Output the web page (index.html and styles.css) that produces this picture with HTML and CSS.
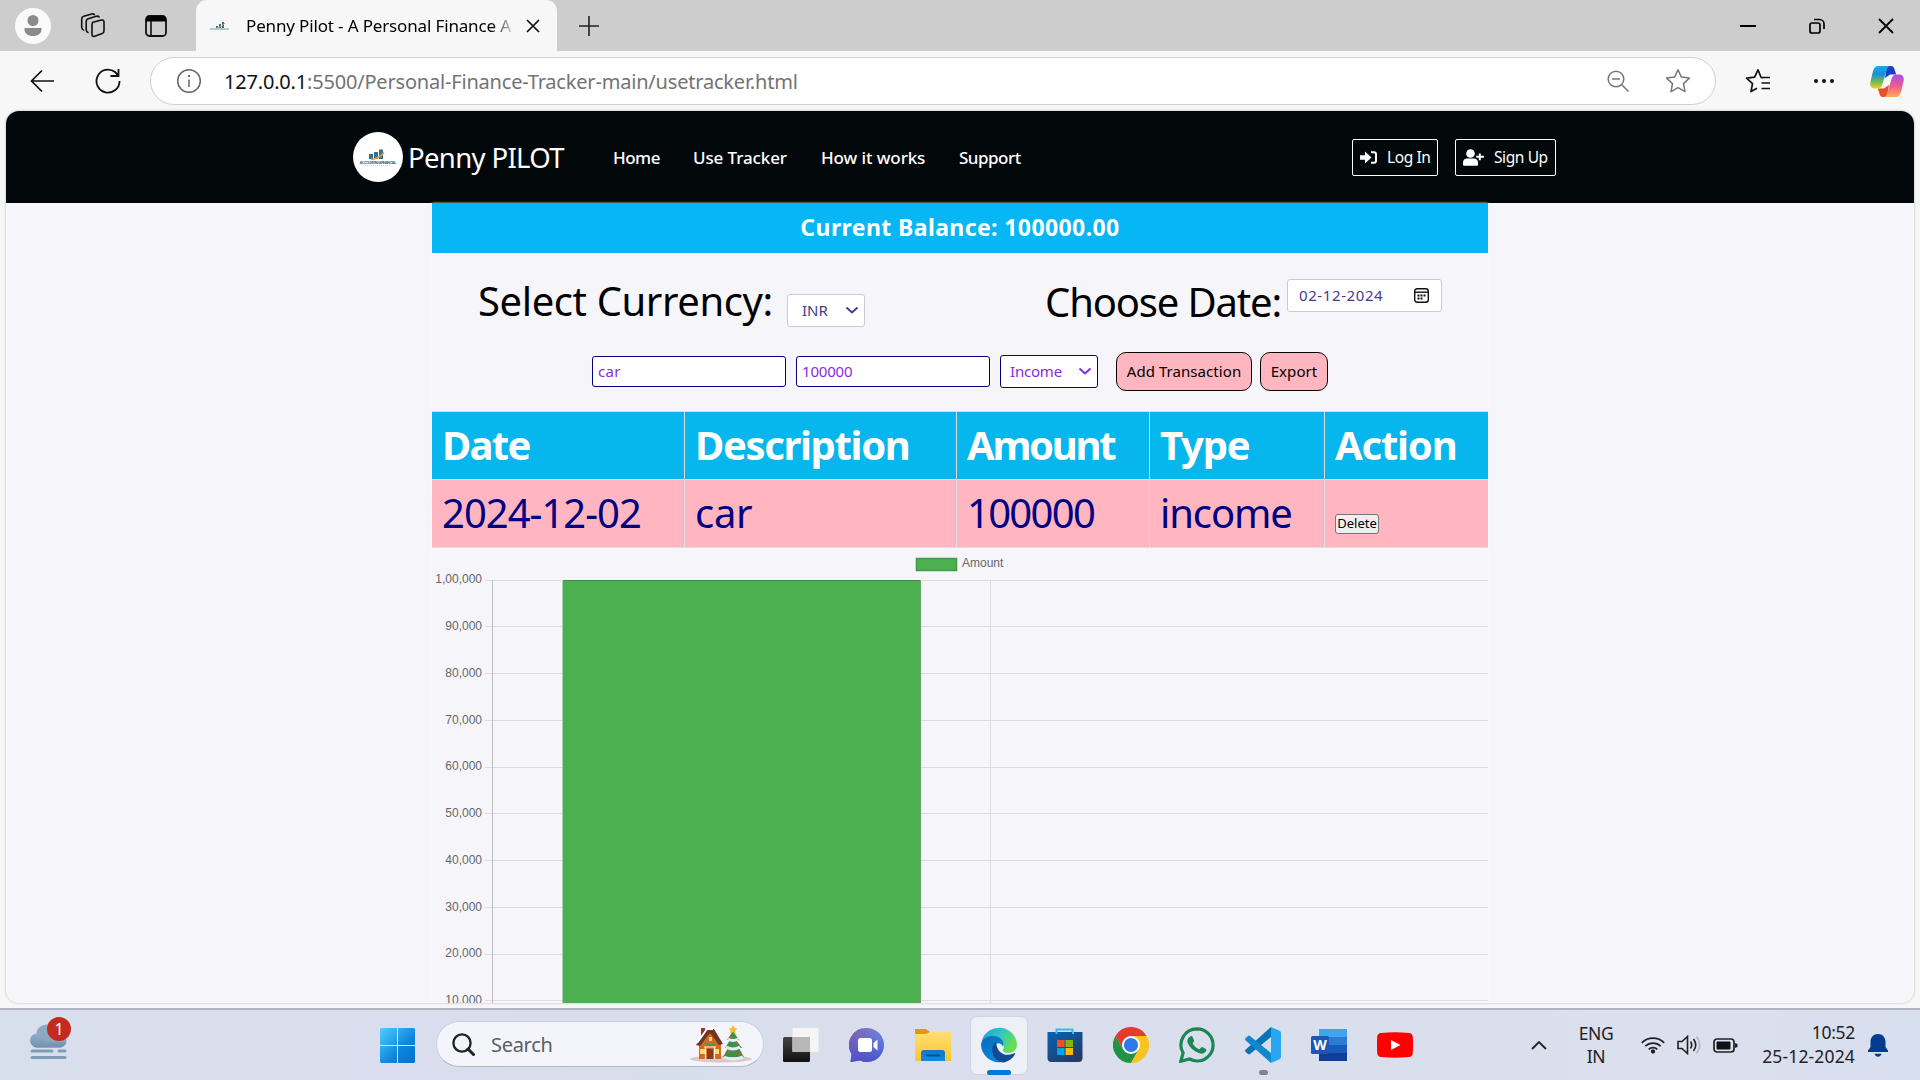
FILE: index.html
```html
<!DOCTYPE html>
<html lang="en">
<head>
<meta charset="utf-8">
<title>Penny Pilot - A Personal Finance App</title>
<link rel="stylesheet" href="styles.css">
</head>
<body>
<div class="tabbar">
  <svg class="profile" width="36" height="36" viewBox="0 0 36 36"><circle cx="18" cy="18" r="18" fill="#fafafa"/><circle cx="18" cy="12.500" r="5.500" fill="#8a8a8a"/><path d="M9.500 20h17v1.500c0 4-3.500 6.500-8.500 6.500s-8.500-2.500-8.500-6.500z" fill="#8a8a8a"/></svg>
  <svg class="workspaces" width="27" height="25" viewBox="0 0 27 25" fill="none" stroke="#111" stroke-width="1.600" stroke-linejoin="round" stroke-linecap="round"><path d="M13 9.300l8.500-2.200q2.500-.6 2.500 2v9q0 2-1.800 2.500l-7.500 2.600q-2.700.8-2.700-1.700V11.500q0-1.700 1-2.200z"/><path d="M8 19.500q-1.800-.5-1.800-3V8.500q0-2 2-2.700l8-2.500q2-.5 2.800.7M3.500 17q-1.800-.6-1.800-3V6q0-2 2-2.700l8-2.300q2-.5 2.600.6"/></svg>
  <svg class="tabs-icon" width="22" height="22" viewBox="0 0 22 22"><rect x="1" y="1" width="20" height="20" rx="3.500" fill="none" stroke="#111" stroke-width="1.800"/><path d="M1 6.500V4a3 3 0 0 1 3-3h14a3 3 0 0 1 3 3v2.500z" fill="#000"/><path d="M6 6v15" stroke="#111" stroke-width="1.600"/></svg>
  <div class="tab">
    <svg width="19" height="10" viewBox="0 0 19 10"><path d="M6 7V5h2v2zM9 7V3h2v4zM12 7V1h2v6z" fill="#37718e"/><path d="M7 7q5-1 8-5" stroke="#f29a38" fill="none"/><path d="M0 8h19" stroke="#8fb0c0" stroke-width="1.300"/></svg>
    <span class="tab-title">Penny Pilot - A Personal Finance A</span>
    <svg width="14" height="14" viewBox="0 0 14 14" stroke="#111" stroke-width="1.700"><path d="M1 1l12 12M13 1L1 13"/></svg>
  </div>
  <svg class="plus" width="22" height="22" viewBox="0 0 22 22" stroke="#222" stroke-width="1.600"><path d="M11 1v20M1 11h20"/></svg>
  <div class="window-controls">
    <svg width="16" height="16" viewBox="0 0 16 16"><path d="M0 8h16" stroke="#000" stroke-width="2"/></svg>
    <svg width="16" height="16" viewBox="0 0 16 16" fill="none" stroke="#000" stroke-width="1.700"><rect x="1" y="5" width="10" height="10" rx="2"/><path d="M5 1.500h5.500a4.500 4.500 0 0 1 4.500 4.500V11"/></svg>
    <svg width="16" height="16" viewBox="0 0 16 16" stroke="#000" stroke-width="1.800"><path d="M1 1l14 14M15 1L1 15"/></svg>
  </div>
</div>
<div class="toolbar">
  <svg class="back" width="25" height="24" viewBox="0 0 25 24" fill="none" stroke="#111" stroke-width="1.700"><path d="M12 1.500L1.500 12 12 22.500M1.500 12H24"/></svg>
  <svg class="reload" width="26" height="26" viewBox="0 0 26 26" fill="none" stroke="#111" stroke-width="1.800"><path d="M24.500 13A11.500 11.500 0 1 1 20 4l3 3M23.500 1v7h-8"/></svg>
  <div class="address">
    <svg class="info" width="26" height="26" viewBox="0 0 26 26" fill="none" stroke="#666" stroke-width="1.500"><circle cx="13" cy="13" r="11.300"/><path d="M13 11.500v7.500"/><path d="M13 7v2" stroke-width="2"/></svg>
    <span class="url"><b>127.0.0.1</b>:5500/Personal-Finance-Tracker-main/usetracker.html</span>
    <svg class="zoomout" width="22" height="22" viewBox="0 0 22 22" fill="none" stroke="#777" stroke-width="1.500"><circle cx="9" cy="9" r="7.800"/><path d="M5 9h8M14.500 14.500l7 7"/></svg>
    <svg class="star" width="26" height="26" viewBox="0 0 26 26" fill="none" stroke="#777" stroke-width="1.500" stroke-linejoin="round"><path d="M13 1.800l3.400 7.300 8 1-5.900 5.500 1.500 8L13 19.700 6 23.600l1.500-8L1.600 10.100l8-1z"/></svg>
  </div>
  <svg class="favs" width="26" height="26" viewBox="0 0 26 26" fill="none" stroke="#111" stroke-width="1.700" stroke-linejoin="round"><path d="M18 10l-2-.8L13 1.800l-3.400 7.300-8 1 5.900 5.500-1.500 8 6-3.300M15.500 9.500H25M16.500 15H25M16.500 20.500H25"/></svg>
  <svg class="dots" width="22" height="6" viewBox="0 0 22 6" fill="#111"><circle cx="3" cy="3" r="2"/><circle cx="11" cy="3" r="2"/><circle cx="19" cy="3" r="2"/></svg>
  <svg class="copilot" width="34" height="31" viewBox="0 0 34 31">
    <defs><linearGradient id="cpa" x2="0" y2="1"><stop stop-color="#1ba8f2"/><stop offset=".35" stop-color="#1c8edb"/><stop offset=".7" stop-color="#6dbb4f"/><stop offset="1" stop-color="#f7cf1b"/></linearGradient><linearGradient id="cpb" x2="0" y2="1"><stop stop-color="#a64ef0"/><stop offset=".5" stop-color="#f0588f"/><stop offset="1" stop-color="#ffad52"/></linearGradient></defs>
    <path d="M17 0h3.500c3 0 3.800 2 4.500 5l1.200 3.500H20L15 12z" fill="#1a3fc4"/><path d="M17 31h-3.500c-3 0-3.800-2-4.500-5l-1.200-3.500H14l5-3.500z" fill="#e8502c"/>
    <path d="M8 0h12c-3 1-3.500 4-4.500 8l-3 10c-1 3-2 4.500-5 4.500H5c-4 0-5.500-3-4.500-7L3 5C4 2 5.500 0 8 0z" fill="url(#cpa)"/>
    <path d="M26 31H14c3-1 3.500-4 4.500-8l3-10c1-3 2-4.500 5-4.500H29c4 0 5.500 3 4.500 7L31 26c-1 3-2.500 5-5 5z" fill="url(#cpb)"/>
  </svg>
</div>
<main class="page">
  <header class="site-header">
    <svg class="logo" width="50" height="50" viewBox="0 0 50 50"><circle cx="25" cy="25" r="25" fill="#fff"/><path d="M16 27v-5h4v5zM21 27v-7h4v7zM26 27v-9.500h4V27z" fill="#37718e"/><path d="M18 27.500q8-1 13-7" stroke="#f29a38" stroke-width="1.500" fill="none"/><text class="logo-name" x="25" y="31.500" textLength="37">ACCOUNTING&amp;FINANCIAL</text><path d="M12 33.500h25" stroke="#c9d7de" stroke-width="1" stroke-dasharray="1 1"/></svg>
    <span class="brand">Penny PILOT</span>
    <nav class="nav"><a class="tight">Home</a><a>Use Tracker</a><a>How it works</a><a class="tight">Support</a></nav>
    <div class="auth">
      <a class="auth-btn login"><svg width="17" height="13" viewBox="0 0 17 13"><path d="M0 4.200h5V.5l6.500 6L5 12.500V8.800H0z" fill="#fff"/><path d="M11 1.200h3a2 2 0 0 1 2 2v6.600a2 2 0 0 1-2 2h-3" fill="none" stroke="#fff" stroke-width="2"/></svg><span>Log In</span></a>
      <a class="auth-btn signup"><svg width="21" height="17" viewBox="0 0 21 17" fill="#fff"><circle cx="7.500" cy="4.500" r="4.300"/><path d="M0 16v-2.500C0 11 2 9.500 4 9.500h7c2 0 4 1.500 4 4V16q0 .8-1 .8H1Q0 16.800 0 16z"/><path d="M15.800 4.500h2v2.300H21v2h-3.200v2.500h-2V8.800h-2.600v-2h2.600z"/></svg><span>Sign Up</span></a>
    </div>
  </header>
  <section class="tracker">
    <div class="balance"><span>Current Balance: 100000.00</span></div>
    <div class="pickers">
      <span class="big cur-label">Select Currency:</span>
      <div class="field cur"><span>INR</span><svg width="14" height="9" viewBox="0 0 14 9" fill="none" stroke="#483d8b" stroke-width="2"><path d="M1.500 1.500L7 6.500l5.500-5"/></svg></div>
      <span class="big date-label">Choose Date:</span>
      <div class="field date"><span>02-12-2024</span><svg width="15" height="15" viewBox="0 0 15 15" fill="none" stroke="#111" stroke-width="1.400"><rect x=".7" y=".7" width="13.600" height="13.600" rx="2.500"/><path d="M1 4.200h13"/><path d="M3.500 7.500h8M3.500 10.500h5" stroke-width="1.800" stroke-dasharray="2 1"/></svg></div>
    </div>
    <div class="entry">
      <div class="input"><span class="car">car</span></div>
      <div class="input"><span>100000</span></div>
      <div class="type-select"><span>Income</span><svg width="14" height="9" viewBox="0 0 14 9" fill="none" stroke="#8a2be2" stroke-width="2"><path d="M1.500 1.500L7 6.500l5.500-5"/></svg></div>
      <div class="btn add"><span>Add Transaction</span></div>
      <div class="btn export"><span>Export</span></div>
    </div>
    <div class="table">
      <div class="row head"><div class="h-date">Date</div><div class="h-desc">Description</div><div class="h-amount">Amount</div><div class="h-type">Type</div><div class="h-action">Action</div></div>
      <div class="row data"><div class="d-date">2024-12-02</div><div class="d-desc">car</div><div class="d-amount">100000</div><div class="d-type">income</div><div class="action"><span class="delete">Delete</span></div></div>
    </div>
    <svg class="chart" width="1056" height="456" viewBox="0 0 1056 456">
      <rect x="484.500" y="10.500" width="40" height="12" fill="#4caf50" stroke="#43994a" stroke-width="1.500"/>
      <text x="530" y="19">Amount</text>
      <g class="labels"><text x="50" y="34.500">1,00,000</text><text x="50" y="82">90,000</text><text x="50" y="129">80,000</text><text x="50" y="176">70,000</text><text x="50" y="222">60,000</text><text x="50" y="269">50,000</text><text x="50" y="316">40,000</text><text x="50" y="363">30,000</text><text x="50" y="409">20,000</text><text x="50" y="456">10,000</text></g>
      <path d="M53 32.500h1003M53 78.500h1003M53 125.500h1003M53 172.500h1003M53 219.500h1003M53 265.500h1003M53 312.500h1003M53 359.500h1003M53 406.500h1003M53 452.500h1003M558.500 32v424" stroke="#dcdbe2"/>
      <path d="M60.500 32v424" stroke="#bdbcc4"/>
      <path d="M131 456V33h357.500v423" fill="#4caf50" stroke="#5fa765"/>
      <path d="M131 32.500h357.500" stroke="#3b8b41"/>
    </svg>
  </section>
</main>
<footer class="taskbar">
  <div class="weather">
    <svg width="37" height="30" viewBox="0 0 37 30"><defs><linearGradient id="cl" x2="0" y2="1"><stop stop-color="#8fb0d0"/><stop offset="1" stop-color="#7590ac"/></linearGradient></defs><path d="M7 29.500a7 7 0 0 1-.5-13.800C7 10 11 6.500 17 6.500c6 0 10 4 11 8.500 5 0 8.500 3 8.500 7.500s-3.500 7-7.500 7z" fill="#8da9c2"/><path d="M7 29.500a7 7 0 1 1 5-12c3 2.500 3 6 8 6h16.300c-.5 4-3.800 6-7.300 6z" fill="url(#cl)"/></svg>
    <svg width="37" height="12" viewBox="0 0 37 12" stroke="#7f9bb5" stroke-width="3" stroke-linecap="round"><path d="M2 3h20M29 3h6M2 9.500h33"/></svg>
    <span class="badge">1</span>
  </div>
  <svg class="start" width="35" height="35" viewBox="0 0 35 35"><defs><linearGradient id="wn" x2="1" y2="1"><stop stop-color="#4fd0ff"/><stop offset=".6" stop-color="#0f85dc"/><stop offset="1" stop-color="#0070d0"/></linearGradient></defs><path d="M1 0h16v17H0V1zM18 0h16l1 1v16H18zM0 18h17v17H1l-1-1zM18 18h17v16l-1 1H18z" fill="url(#wn)"/></svg>
  <div class="search">
    <svg class="glass" width="23" height="23" viewBox="0 0 23 23" fill="none" stroke="#222" stroke-width="2.300" stroke-linecap="round"><circle cx="10" cy="10" r="8.600"/><path d="M16 16l5.500 5.500" stroke-width="3"/></svg>
    <span>Search</span>
    <svg class="xmas" width="64" height="38" viewBox="0 0 64 38">
      <ellipse cx="32" cy="34" rx="31" ry="3.500" fill="#dcc8ca"/>
      <path d="M10 17L20 5l12 12v17H10z" fill="#d46a1f"/><path d="M12 3h4v8h-4z" fill="#9b3328"/><path d="M7 20L17 4h8l9 15-4 1-9-12-10 13z" fill="#713528"/><path d="M8 18l10-14h6" stroke="#fff" stroke-width="1.800" fill="none"/><path d="M16 18q5 4 10 0" stroke="#3a9b5a" stroke-width="2" fill="none"/><path d="M18 24h6v10h-6z" fill="#8d3a19"/><path d="M11 24h5v5h-5zM26 24h4v5h-4zM20 12h3v4h-3z" fill="#ffd873"/><path d="M15 22h12M16.500 22v12M25.500 22v12" stroke="#fff0e6" stroke-width="1.200"/>
      <path d="M44 6l6 9h-3l6 8h-3l5 9H34l5-9h-3l5-8h-3z" fill="#3b9245"/><path d="M39 14q5 3 10 0M37 22q7 4 14 0M35 32q9 4 19 0" stroke="#e2ecfa" stroke-width="3" fill="none"/><path d="M44 0l1.500 3 3 .4-2.200 2 .6 3L44 7l-3 1.400.6-3-2.200-2 3-.4z" fill="#fbbf2d"/><g fill="#e04b3c"><circle cx="42" cy="12" r="1.200"/><circle cx="47" cy="19" r="1.300"/><circle cx="40" cy="27" r="1.400"/><circle cx="50" cy="29" r="1.400"/></g>
    </svg>
  </div>
  <div class="apps">
    <div class="app"><svg width="36" height="36" viewBox="0 0 36 36"><defs><linearGradient id="tv" x2="0" y2="1"><stop stop-color="#444"/><stop offset="1" stop-color="#111"/></linearGradient></defs><rect x="0" y="10" width="27" height="25" rx="1.500" fill="url(#tv)"/><rect x="9.500" y="1" width="26" height="24" rx="1" fill="#f5f5f5"/><path d="M9.500 10H27v15H9.500z" fill="#b7b7b7"/></svg></div>
    <div class="app"><svg width="36" height="36" viewBox="0 0 36 36"><defs><linearGradient id="ch" x1="0" x2="1" y2=".3"><stop stop-color="#8a5ba8"/><stop offset="1" stop-color="#6a8eea"/></linearGradient><linearGradient id="ch2" x2="0" y2="1"><stop stop-color="#5058cc" stop-opacity="0"/><stop offset="1" stop-color="#4e50c8"/></linearGradient></defs><path d="M18 1a17 17 0 1 1-7 32.500L1.500 35l1-8A17 17 0 0 1 18 1z" fill="url(#ch)"/><path d="M18 1a17 17 0 1 1-7 32.500L1.500 35l1-8A17 17 0 0 1 18 1z" fill="url(#ch2)"/><rect x="9" y="11" width="14" height="14" rx="2.500" fill="#fff"/><path d="M24.500 16l4-3.500v11l-4-3.500z" fill="#fff"/></svg></div>
    <div class="app"><svg width="36" height="36" viewBox="0 0 36 36"><defs><linearGradient id="fd" x2="0" y2="1"><stop stop-color="#ffde74"/><stop offset="1" stop-color="#fbc530"/></linearGradient><linearGradient id="fb" x2="0" y2="1"><stop stop-color="#0f76cd"/><stop offset="1" stop-color="#0b8de0"/></linearGradient></defs><path d="M0 2h11l4 3v10H0z" fill="#dc9c08"/><path d="M0 7h11l4-2h21v29H0z" fill="url(#fd)"/><path d="M6 34v-8a3 3 0 0 1 3-3h18a3 3 0 0 1 3 3v8z" fill="url(#fb)"/><path d="M11 28.500h14" stroke="#05498c" stroke-width="1.800"/></svg></div>
    <div class="app active"><svg width="36" height="36" viewBox="0 0 36 36"><defs><linearGradient id="eg" x2="1" y2=".4"><stop stop-color="#1c9dd8"/><stop offset=".55" stop-color="#2fc7c5"/><stop offset="1" stop-color="#66df4f"/></linearGradient><linearGradient id="eb" x2=".6" y2="1"><stop stop-color="#0c68b8"/><stop offset="1" stop-color="#0989dd"/></linearGradient></defs><path d="M1 13A18 18 0 0 1 36 17c0 6-4 9-9 9-4 0-6-2-5-3.500 2-3 1-10-9-10Q5 12 0 19z" fill="url(#eg)"/><path d="M0 18C1 11 7 9 12 9c8 0 12 6 10 11-1-4-7-6-9 0-1 6 2 11 8 15A18 18 0 0 1 0 18z" fill="url(#eb)"/><path d="M15 15c-7 5-4 19 7 20.500 5-.5 10-4 12-8.500.5-1-.5-1-1.500-.6C25 30 16 27 15 15z" fill="#104c96"/></svg></div>
    <div class="app"><svg width="36" height="36" viewBox="0 0 36 36"><defs><linearGradient id="st" x2=".7" y2="1"><stop stop-color="#0764b6"/><stop offset="1" stop-color="#243a66"/></linearGradient></defs><path d="M9.500 8V2.500h16V8" fill="none" stroke="#33bdf2" stroke-width="2"/><path d="M.5 5h35v26a4 4 0 0 1-4 4h-27a4 4 0 0 1-4-4z" fill="url(#st)"/><path d="M9.500 5v2M26 5v2" stroke="#33bdf2" stroke-width="2"/><path d="M10 13h7.500v7H10z" fill="#f25022"/><path d="M18.500 13H26v7h-7.500z" fill="#7fba00"/><path d="M10 21h7.500v7H10z" fill="#00a4ef"/><path d="M18.500 21H26v7h-7.500z" fill="#ffb900"/></svg></div>
    <div class="app"><svg width="36" height="36" viewBox="0 0 36 36"><path d="M2.400 9A18 18 0 0 1 33.600 9L18 9 10.200 22.500z" fill="#e33b2e"/><path d="M2.400 9A18 18 0 0 0 18 36l7.800-13.500H10.200z" fill="#229342"/><path d="M33.600 9A18 18 0 0 1 18 36l7.800-13.500L18 9z" fill="#fcc31e"/><circle cx="18" cy="18" r="9" fill="#fff"/><circle cx="18" cy="18" r="7.100" fill="#2f78e8"/></svg></div>
    <div class="app"><svg width="36" height="36" viewBox="0 0 36 36"><path d="M18 1.800A16 16 0 0 1 18 34a16 16 0 0 1-7.500-2L1.800 34.200l2.300-8.300A16.100 16.100 0 0 1 18 1.800z" fill="none" stroke="#1b8755" stroke-width="3.200"/><path d="M11 9.500c1-.8 2-.7 2.500.3l1.600 3.600c.3 1-1.800 2.300-1.400 3.100 1.500 2.700 3.600 4.600 6.500 5.700 1 .3 2-2.500 3-2.100l3.700 1.800c.8.500.2 2.500-.7 3.400-1.700 1.500-4 1.700-6.500.8-5.200-1.700-9-5.400-11-10-.9-2.600 0-5 2.300-6.600z" fill="#1b8755"/></svg></div>
    <div class="app running"><svg width="36" height="36" viewBox="0 0 36 36"><path d="M26 0v10L5 27q-1 .8-2 0l-2.500-2.200q-1-1 0-2z" fill="#0873b8"/><path d="M26 36V26L5 9q-1-.8-2 0L.5 11.200q-1 1 0 2z" fill="#1088cf"/><path d="M26 0l8.500 3.800q1.500.7 1.500 2.200v24q0 1.500-1.500 2.200L26 36z" fill="#27a7f2"/></svg></div>
    <div class="app"><svg width="36" height="36" viewBox="0 0 36 36"><rect x="8" y="2" width="28" height="8.500" fill="#41a5ee"/><rect x="8" y="10" width="28" height="8.500" fill="#2b7cd3"/><rect x="8" y="18" width="28" height="8" fill="#185abd"/><rect x="8" y="26" width="28" height="8" fill="#103f91"/><rect y="9" width="18" height="18" rx="1.500" fill="#1d56b4"/><text class="word" x="9" y="23">W</text></svg></div>
    <div class="app"><svg width="36" height="36" viewBox="0 0 36 36"><path d="M4 6q14-1.500 28 0 3.500.3 3.800 4 .4 8 0 16-.3 3.700-3.800 4-14 1.500-28 0-3.500-.3-3.800-4-.4-8 0-16Q.5 6.300 4 6z" fill="#fe0000"/><path d="M14 13l9.500 5-9.500 5z" fill="#fff"/></svg></div>
  </div>
  <div class="tray">
    <svg width="16" height="9" viewBox="0 0 16 9" fill="none" stroke="#222" stroke-width="1.800"><path d="M1 8l7-7 7 7"/></svg>
    <div class="lang"><span>ENG</span><span>IN</span></div>
    <svg class="wifi" width="24" height="18" viewBox="0 0 24 18" fill="none" stroke="#222" stroke-width="1.700"><path d="M.8 6.800a15.800 15.800 0 0 1 22.400 0M4.300 10.200a11 11 0 0 1 15.400 0M7.700 13.400a6.200 6.200 0 0 1 8.600 0"/><circle cx="12" cy="15.500" r="1.300" fill="#222"/></svg>
    <svg class="vol" width="25" height="20" viewBox="0 0 25 20" fill="none" stroke="#222" stroke-width="1.600"><path d="M1 6.500h4L10.500 1.500v17L5 13.500H1z"/><path d="M13.500 6.500q2.500 3.500 0 7M16.500 4q4.500 6 0 12"/><path d="M19.500 1.500q6.500 8.500 0 17" stroke="#b3b6c2"/></svg>
    <svg class="batt" width="25" height="15" viewBox="0 0 25 15"><rect x="1" y="1" width="20" height="13" rx="3" fill="none" stroke="#222" stroke-width="1.700"/><rect x="3.500" y="3.500" width="14" height="8" rx="1" fill="#111"/><path d="M22 5l2.500 1v3L22 10z" fill="#222"/></svg>
    <div class="clock"><span class="time">10:52</span><span class="day">25-12-2024</span></div>
    <svg class="bell" width="20" height="23" viewBox="0 0 20 23" fill="#063c8f"><path d="M10 0c4.500 0 7.500 3.500 7.500 8v5l2.500 3.500V18H0v-1.500L2.500 13V8C2.500 3.500 5.500 0 10 0zM6.500 19.800h7q-1 3-3.500 3t-3.500-3z"/></svg>
  </div>
</footer>
</body>
</html>
```
FILE: styles.css
```css
* { box-sizing: border-box; }
body { margin: 0; width: 1920px; height: 1080px; overflow: hidden; display: flex; flex-direction: column; background: #f7f7f7; font-family: "Noto Sans", sans-serif; color: #000; }
svg { display: block; flex: none; }
span { white-space: nowrap; }
.tabbar { height: 51px; flex: none; background: #cdcdcd; display: flex; align-items: center; padding-left: 15px; }
.workspaces { margin-left: 29px; }
.tabs-icon { margin-left: 38px; }
.tab { height: 51px; width: 361px; margin-left: 29px; background: #f7f7f7; border-radius: 11px 11px 0 0; display: flex; align-items: center; padding-left: 14px; }
.tab-title { margin-left: 17px; width: 269px; overflow: hidden; font-size: 17px; letter-spacing: -.15px; margin-right: 11px; -webkit-mask-image: linear-gradient(90deg, #000 246px, transparent 270px); mask-image: linear-gradient(90deg, #000 246px, transparent 270px); }
.plus { margin-left: 21px; }
.window-controls { margin-left: auto; margin-right: 26px; display: flex; gap: 53px; }
.toolbar { height: 60px; flex: none; display: flex; align-items: center; padding-left: 30px; }
.reload { margin-left: 40px; }
.address { margin-left: 29px; width: 1566px; height: 48px; border: 1.500px solid #cfcfcf; border-radius: 24px; background: #fff; display: flex; align-items: center; padding-left: 25px; }
.url { margin-left: 22px; width: 1383px; font-size: 20px; letter-spacing: -.19px; color: #737373; }
.url b { font-weight: 400; color: #111; }
.star { margin-left: 36px; }
.favs { margin-left: 29px; }
.dots { margin-left: 42px; }
.copilot { margin-left: 35px; }
.page { width: 1908px; height: 892px; margin-left: 6px; flex: none; background: #f6f5fa; border-radius: 13px; overflow: hidden; box-shadow: 0 0 3px #bbb; }
.site-header { height: 92px; background: #02080a; display: flex; align-items: center; padding-left: 347px; color: #fff; }
.logo-name { font: 700 4px "Liberation Sans", sans-serif; fill: #4a6b7c; text-anchor: middle; }
.brand { width: 205px; margin-left: 5px; font-size: 27.500px; letter-spacing: -.65px; }
.nav { display: grid; grid-template-columns: 80px 128px 138px 393px; font-size: 17px; font-weight: 500; letter-spacing: -.1px; }
.tight { letter-spacing: -.5px; }
.auth { display: flex; gap: 17px; }
.auth-btn { height: 37px; border: 1.500px solid #fff; border-radius: 2px; display: flex; align-items: center; padding-left: 7px; font-size: 15.500px; letter-spacing: -.4px; }
.login { width: 86px; }
.login span { margin-left: 10px; }
.signup { width: 101px; }
.signup span { margin-left: 10px; }
.tracker { width: 1056px; margin-left: 426px; box-shadow: 0 0 2px #ffffff; }
.balance { height: 50px; padding-bottom: 2px; background: #06b6f5; color: #fff; font-weight: 700; font-size: 23px; letter-spacing: .4px; display: flex; align-items: center; justify-content: center; }
.pickers { height: 99px; display: flex; align-items: flex-start; padding-left: 46px; }
.big { font-size: 40px; line-height: 56px; margin-top: 20px; letter-spacing: -.4px; }
.cur-label { width: 309px; }
.field { height: 33px; background: #fff; border: 1px solid #ccc; border-radius: 3px; display: flex; align-items: center; font-size: 15px; color: #483d8b; }
.field span { margin-top: -2px; }
.cur { width: 78px; margin-top: 41px; padding: 0 5px 0 14px; justify-content: space-between; }
.date-label { margin-left: 180px; width: 241px; margin-top: 21px; letter-spacing: -1.150px; }
.date { width: 155px; margin-top: 26px; margin-left: 1px; padding: 0 12px 0 11px; justify-content: space-between; letter-spacing: .6px; }
.entry { height: 39px; display: flex; align-items: center; padding-left: 160px; font-size: 15px; letter-spacing: -.2px; color: #8a2be2; }
.entry span { margin-top: -2px; }
.input { width: 194px; height: 31px; margin-right: 10px; border: 1px solid navy; border-radius: 3px; background: #fff; display: flex; align-items: center; padding-left: 5px; }
.car { letter-spacing: .3px; }
.type-select { width: 98px; height: 33px; border: 1px solid navy; border-radius: 3px; background: #fff; display: flex; align-items: center; justify-content: space-between; padding: 0 5px 0 9px; }
.btn { height: 39px; border: 1px solid #000; border-radius: 10px; background: #ffb6c1; color: #000; display: flex; align-items: center; justify-content: center; letter-spacing: .06px; }
.add { width: 136px; margin-left: 18px; }
.export { width: 68px; margin-left: 8px; }
.table { margin-top: 20px; border-top: 1px solid #ddd; }
.row { height: 68px; display: grid; grid-template-columns: 253px 272px 193px 175px 163px; border-bottom: 1px solid #ddd; font-size: 40px; }
.row > div { border-right: 1px solid #ddd; padding: 0 0 2px 10px; display: flex; align-items: center; }
.row > div:last-child { border-right: 0; }
.head { background: #06b6ec; color: #fff; font-weight: 700; }
.data { background: #ffb6c1; color: navy; }
.h-date { letter-spacing: -1.700px; }
.h-desc { letter-spacing: -1.350px; }
.h-amount { letter-spacing: -2.300px; }
.h-type { letter-spacing: -1.200px; }
.h-action { letter-spacing: -1.200px; }
.d-date { letter-spacing: -1px; }
.d-desc { letter-spacing: -.3px; }
.d-amount { letter-spacing: -1.700px; }
.d-type { letter-spacing: -1.100px; }
.delete { height: 20px; width: 44px; border: 1px solid #767676; border-radius: 3px; background: #efefef; color: #000; font-size: 13px; line-height: 17px; text-align: center; margin-top: 23px; }
.chart text { font: 12px "Liberation Sans", sans-serif; fill: #666; }
.chart .labels { text-anchor: end; }
.taskbar { height: 72px; margin-top: 5px; flex: none; border-top: 2px solid #b0b4c0; background: linear-gradient(90deg, #d8dfec, #dadded 22%, #d7deeb 35%, #dbdeec 50%, #d9dfed 75%, #dcdfee 88%, #d8dfef); display: flex; align-items: center; }
.weather { width: 37px; margin-left: 30px; position: relative; margin-top: -13px; }
.badge { position: absolute; left: 17px; top: -1px; width: 24px; height: 24px; border-radius: 50%; background: #c42b1c; color: #fff; font-size: 16px; line-height: 24px; text-align: center; }
.start { margin-left: 313px; }
.search { width: 328px; height: 46px; margin-left: 21px; margin-top: -2px; border: 1.500px solid #c9cee0; border-bottom-color: #b3b8c8; border-radius: 23px; background: #f3f5fa; display: flex; align-items: center; padding-left: 15px; font-size: 20px; letter-spacing: -.3px; color: #5c5f66; }
.search span { width: 198px; margin-left: 16px; }
.apps { display: flex; margin-left: 9px; gap: 10px; }
.app { width: 56px; height: 57px; border-radius: 6px; display: flex; align-items: center; justify-content: center; position: relative; }
.active { background: #eef0f8; box-shadow: 0 0 1px 1px #d0d3df; }
.active::after { content: ""; position: absolute; bottom: -1px; width: 24px; height: 5px; border-radius: 3px; background: #0078d4; }
.running::after { content: ""; position: absolute; bottom: -1px; width: 9px; height: 5px; border-radius: 3px; background: #80838d; }
.word { font: 700 14px "Noto Sans", sans-serif; fill: #fff; text-anchor: middle; }
.tray { display: flex; align-items: center; margin-left: 108px; font-size: 17.500px; line-height: 23px; color: #222; }
.lang { width: 50px; margin-left: 24px; display: flex; flex-direction: column; align-items: center; letter-spacing: -.4px; }
.wifi { margin-left: 20px; }
.vol { margin-left: 12px; }
.batt { margin-left: 11px; }
.clock { width: 106px; margin: -2px 0 0 11px; display: flex; flex-direction: column; align-items: flex-end; line-height: 24px; }
.time { letter-spacing: -.3px; }
.day { letter-spacing: .15px; }
.bell { margin-left: 13px; margin-top: 1px; }
```
